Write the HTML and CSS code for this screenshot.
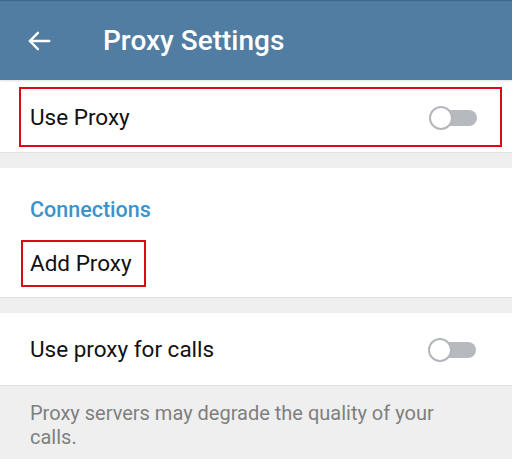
FILE: index.html
```html
<!DOCTYPE html>
<html>
<head>
<meta charset="utf-8">
<link rel="stylesheet" href="styles.css">
</head>
<body>
<div class="app">
  <header class="topbar">
    <svg class="back" width="26" height="26" viewBox="0 0 24 24"><path d="M21.5 12H3.5M11 4.5L3.5 12L11 19.5" fill="none" stroke="#fff" stroke-width="2.2" stroke-linecap="round" stroke-linejoin="round"/></svg>
    <h1 class="title">Proxy Settings</h1>
  </header>

  <section class="card card-first">
    <div class="row row-boxed">
      <span class="label">Use Proxy</span>
      <span class="switch"><span class="knob"></span></span>
    </div>
  </section>

  <div class="gap"></div>

  <section class="card card-conn">
    <div class="section-title">Connections</div>
    <div class="add-wrap"><span class="add-box label">Add Proxy</span></div>
  </section>

  <div class="gap"></div>

  <section class="card">
    <div class="row row-plain">
      <span class="label">Use proxy for calls</span>
      <span class="switch"><span class="knob"></span></span>
    </div>
  </section>

  <div class="note">Proxy servers may degrade the quality of your calls.</div>
</div>
</body>
</html>
```

FILE: styles.css
```css
* { box-sizing: border-box; }
html, body { margin: 0; padding: 0; }
body {
  background: #efefef;
  font-family: Roboto, "Noto Sans", sans-serif;
  width: 512px;
  height: 459px;
  overflow: hidden;
}
.topbar {
  height: 80px;
  background: #517da2;
  border-top: 1px solid #3f6587;
  display: flex;
  align-items: center;
  padding-left: 26px;
  box-shadow: 0 1px 2px rgba(0,0,0,0.12);
  position: relative;
  z-index: 1;
}
.back { display: block; }
.title {
  margin: 0 0 0 51px;
  color: #fff;
  font-size: 28px;
  font-weight: 500;
}
.card { background: #fff; }
.card-first { padding: 7px 10px 5px 19px; }
.row {
  display: flex;
  align-items: center;
  justify-content: space-between;
}
.row-boxed {
  height: 60px;
  border: 2px solid #d90b16;
  padding: 0 23px 0 9px;
}
.row-plain {
  height: 72px;
  padding: 0 36px 0 30px;
}
.label {
  font-size: 22.5px;
  color: #111;
}
.switch {
  position: relative;
  width: 44px;
  height: 16px;
  border-radius: 8px;
  background: #b6babf;
  margin-top: 2px;
}
.knob {
  position: absolute;
  left: -4px;
  top: -4px;
  width: 24px;
  height: 24px;
  border-radius: 50%;
  background: #fff;
  border: 2.5px solid #b3b6bb;
}
.gap {
  height: 16px;
  background: #efefef;
  border-top: 1px solid #e2e2e2;
}
.card-conn { height: 129px; padding-top: 28px; }
.section-title {
  padding-left: 30px;
  color: #3a93cd;
  font-size: 21.5px;
  font-weight: 500;
  height: 28px;
  line-height: 28px;
}
.add-wrap { padding: 16px 0 0 21px; }
.add-box {
  display: inline-block;
  border: 2px solid #d90b16;
  height: 47px;
  line-height: 43px;
  padding: 0 12px 0 7px;
}
.note {
  border-top: 1px solid #e2e2e2;
  padding: 15px 60px 0 30px;
  font-size: 20px;
  line-height: 24px;
  color: #7f7f7f;
}
```
